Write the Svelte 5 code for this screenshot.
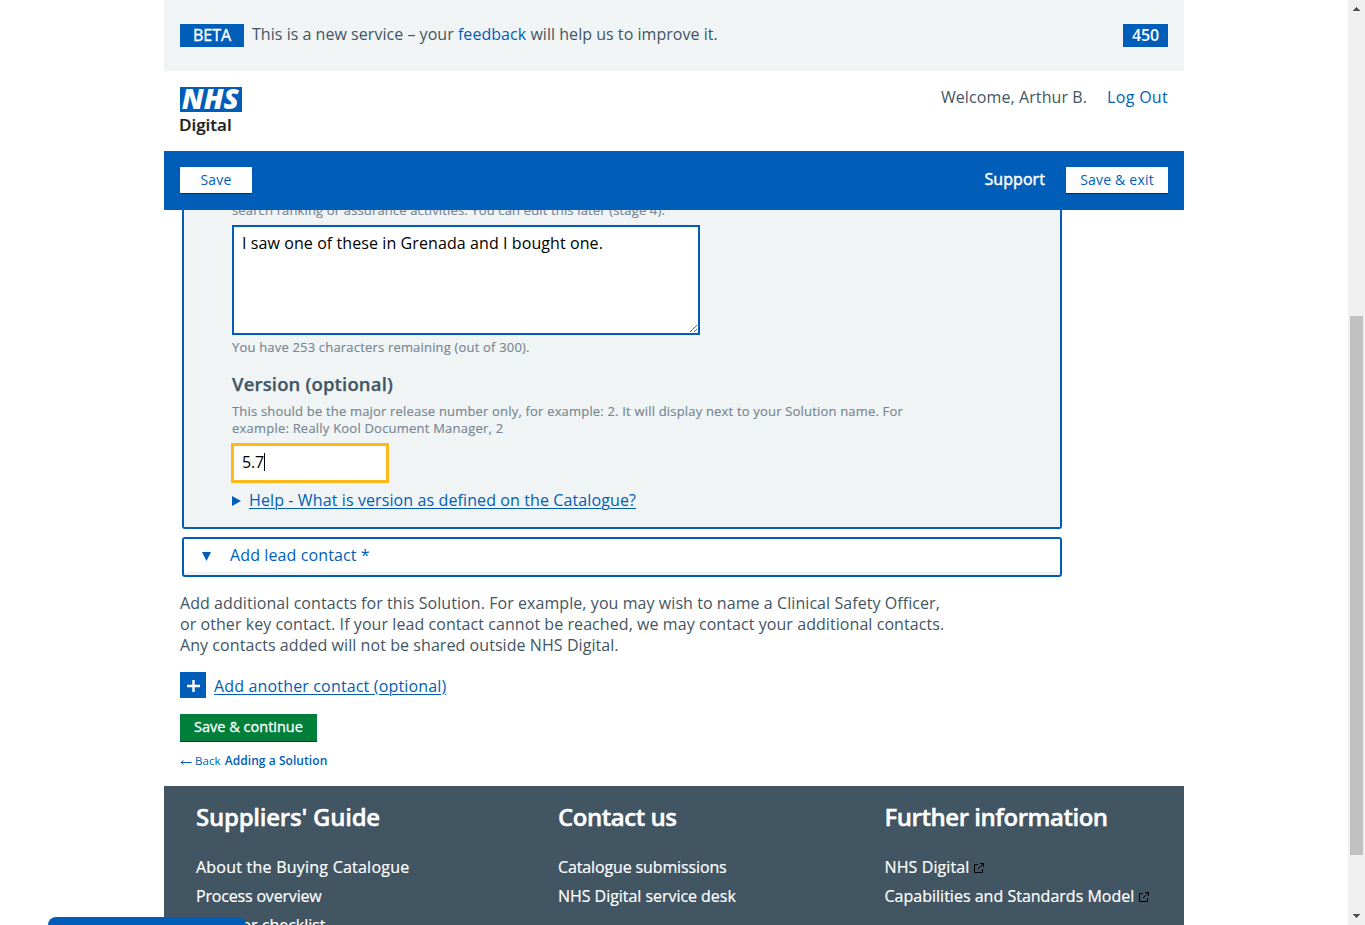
<script>
  const columns = [
    {
      title: "Suppliers' Guide",
      titleSpacing: -0.24,
      links: [
        { label: 'About the Buying Catalogue', spacing: 0.23 },
        { label: 'Process overview', spacing: -0.18 },
        { label: 'Supplier checklist', spacing: -0.02 }
      ]
    },
    {
      title: 'Contact us',
      titleSpacing: -0.46,
      links: [
        { label: 'Catalogue submissions', spacing: -0.13 },
        { label: 'NHS Digital service desk', spacing: -0.04 }
      ]
    },
    {
      title: 'Further information',
      titleSpacing: -0.47,
      links: [
        { label: 'NHS Digital', spacing: 0.1, external: true },
        { label: 'Capabilities and Standards Model', spacing: 0.01, external: true }
      ]
    }
  ];
  let description = $state('I saw one of these in Grenada and I bought one.');
</script>

<div class="window">
  <div class="page">
    <div class="beta-bar">
      <span class="tag beta">BETA</span>
      <span class="beta-text">This is a new service – your <a href="#feedback">feedback</a> will help us to improve it.</span>
      <span class="tag score">450</span>
    </div>

    <header>
      <div class="brand">
        <svg class="nhs" width="62" height="25" viewBox="0 0 62 25" role="img" aria-label="NHS">
          <rect width="62" height="25" fill="#005eb8" />
          <text x="1.8" y="22.3" textLength="57" lengthAdjust="spacingAndGlyphs">NHS</text>
        </svg>
        <span class="org">Digital</span>
      </div>
      <div class="account">
        <span>Welcome, Arthur B.</span>
        <a href="#logout">Log Out</a>
      </div>
    </header>

    <nav>
      <button class="nav-btn save">Save</button>
      <div class="nav-right">
        <a class="support" href="#support">Support</a>
        <button class="nav-btn exit">Save &amp; exit</button>
      </div>
    </nav>

    <main>
      <section class="panel">
        <p class="hint first">search ranking or assurance activities. You can edit this later (stage 4).</p>
        <textarea bind:value={description} spellcheck="false"></textarea>
        <p class="hint remaining">You have 253 characters remaining (out of 300).</p>
        <h3>Version (optional)</h3>
        <p class="hint version">This should be the major release number only, for example: 2. It will display next to your Solution name. For<br /><span class="second">example: Really Kool Document Manager, 2</span></p>
        <div class="input"><span>5.7</span><i class="caret"></i></div>
        <div class="help">
          <svg width="9" height="10" viewBox="0 0 9 10"><path d="M0 0L9 5L0 10Z" fill="#005eb8" /></svg>
          <a href="#help">Help - What is version as defined on the Catalogue?</a>
        </div>
      </section>

      <section class="lead">
        <div class="lead-row">
          <svg width="9" height="9" viewBox="0 0 9 9"><path d="M0 0H9L4.5 9Z" fill="#005eb8" /></svg>
          <span>Add lead contact *</span>
        </div>
      </section>

      <p class="copy">Add additional contacts for this Solution. For example, you may wish to name a Clinical Safety Officer,<br />or other key contact. If your lead contact cannot be reached, we may contact your additional contacts.<br />Any contacts added will not be shared outside NHS Digital.</p>

      <div class="add">
        <span class="plus"><svg width="26" height="26" viewBox="0 0 26 26"><path d="M7 14H20M13.5 8V20" stroke="#fff" stroke-width="2.4" fill="none" /></svg></span>
        <a href="#add">Add another contact (optional)</a>
      </div>
      <button class="continue">Save &amp; continue</button>
      <a class="back" href="#back"><svg width="12" height="8" viewBox="0 0 12 8"><path d="M1 4.5H11.5M3.5 2.5L1 4.5L3.5 6.5" stroke="#005eb8" fill="none" /></svg>Back <b>Adding a Solution</b></a>
    </main>

    <footer>
      {#each columns as col}
        <div>
          <h2 style="letter-spacing:{col.titleSpacing}px">{col.title}</h2>
          <ul>
            {#each col.links as link}
              <li>
                <a href="#link" style="letter-spacing:{link.spacing}px">{link.label}</a>
                {#if link.external}
                  <svg width="10" height="10" viewBox="0 0 10 10"><path d="M4 1.5H.5V9.5H8.5V6M6 .5H9.5V4M9.5 .5L4 6" stroke="#000" fill="none" /></svg>
                {/if}
              </li>
            {/each}
          </ul>
        </div>
      {/each}
    </footer>
    <div class="drawer"></div>
  </div>

  <div class="scrollbar">
    <svg width="7" height="4" viewBox="0 0 7 4" shape-rendering="crispEdges"><path d="M3 0h1v1h1v1h1v1h1v1H0V3h1V2h1V1h1z" fill="#505050" /></svg>
    <div class="thumb"></div>
    <svg width="7" height="4" viewBox="0 0 7 4" shape-rendering="crispEdges"><path d="M0 0h7v1H6v1H5v1H4v1H3V3H2V2H1V1H0z" fill="#505050" /></svg>
  </div>
</div>

<style>
  :global(body) { margin: 0; overflow: hidden; }
  * { box-sizing: border-box; }
  p, h2, h3, ul { margin: 0; padding: 0; }
  a { color: #005eb8; text-decoration: none; }
  svg { display: block; flex: none; }
  button { font: inherit; border: 0; padding: 0; border-radius: 0; }
  .window {
    display: flex; width: 1365px; height: 925px; overflow: hidden; background: #fff;
    font: 16px/21px "Open Sans", "Noto Sans", sans-serif; color: #425563;
  }
  .page { position: relative; width: 1348px; height: 925px; padding: 0 164px; overflow: hidden; }
  .beta-bar { display: flex; align-items: flex-start; height: 71px; padding: 24px 16px 0; background: #f0f4f5; }
  .tag { height: 23px; background: #005eb8; color: #fff; text-align: center; line-height: 22px; }
  .beta { width: 64px; -webkit-text-stroke: 0.35px #fff; }
  .score { width: 45px; margin-left: auto; font-weight: 600; letter-spacing: -0.2px; }
  .beta-text { margin-left: 8px; letter-spacing: 0.057px; word-spacing: -0.1px; }
  header { display: flex; justify-content: space-between; height: 80px; padding: 16px 16px 0; }
  .nhs text { font: italic 800 28px "Open Sans", sans-serif; fill: #fff; }
  .org { display: block; margin: 2px 0 0 -1px; color: #231f20; font-weight: 600; font-size: 17px; line-height: 21px; letter-spacing: 0; -webkit-text-stroke: 0.2px #231f20; }
  .account { display: flex; gap: 20px; letter-spacing: 0.1px; }
  .account a { letter-spacing: 0.3px; }
  nav { display: flex; justify-content: space-between; height: 59px; padding: 16px 16px 0; background: #005eb8; }
  .nav-btn { height: 27px; background: #fff; color: #005eb8; border-bottom: 1px solid #212b32; font-size: 14px; line-height: 26px; letter-spacing: 0.2px; }
  .save { width: 72px; }
  .exit { width: 102px; }
  .nav-right { display: flex; gap: 21px; }
  .support { color: #fff; -webkit-text-stroke: 0.45px #fff; line-height: 24px; letter-spacing: 0.07px; }
  main { height: 576px; overflow: hidden; padding: 0 16px; }
  .panel { width: 880px; height: 319px; margin-left: 2px; padding-left: 48px; border: 2px solid #005eb8; border-top: 0; border-radius: 0 0 3px 3px; background: #f0f4f5; display: flow-root; }
  .hint { font-size: 13px; line-height: 17px; color: #768692; letter-spacing: 0.184px; white-space: nowrap; -webkit-text-stroke: 0.15px #768692; }
  .second { letter-spacing: 0.215px; }
  .first { margin-top: -8px; letter-spacing: 0.146px; }
  textarea { display: block; width: 468px; height: 110px; margin-top: 6px; padding: 6px 8px; border: 2px solid #005eb8; background: #fff; color: #000; font: inherit; letter-spacing: 0.087px; outline: 0; border-radius: 0; overflow: hidden; resize: both; }
  .remaining { margin-top: 4px; }
  h3 { margin-top: 16px; font-size: 18.5px; line-height: 24px; font-weight: 600; letter-spacing: 0.16px; -webkit-text-stroke: 0.25px #425563; }
  .version { margin-top: 7px; }
  .input { display: flex; align-items: center; width: 158px; height: 40px; margin: 6px 0 0 -1px; padding: 0 8px 2px; border: 3px solid #ffb81c; background: #fff; color: #000; }
  .input span { letter-spacing: -0.2px; }
  .caret { width: 1px; height: 18px; background: #000; }
  .help { display: flex; align-items: center; gap: 8px; margin-top: 6px; line-height: 22px; }
  .help svg { margin-top: 1px; }
  .help a, .add a { text-decoration: underline; text-underline-offset: 2px; text-decoration-thickness: 1px; }
  .help a { letter-spacing: 0.11px; }
  .lead { width: 880px; height: 40px; margin: 8px 0 0 2px; border: 2px solid #005eb8; border-radius: 3px; background: #f0f4f5; }
  .lead-row { display: flex; align-items: center; height: 33px; padding: 0 0 0 18px; gap: 19px; background: #fff; color: #005eb8; letter-spacing: 0.11px; }
  .lead-row svg { margin-top: 2px; }
  .copy { margin-top: 16px; letter-spacing: 0.067px; white-space: nowrap; }
  .add { display: flex; align-items: center; gap: 8px; margin-top: 16px; height: 26px; letter-spacing: 0.16px; }
  .add a { margin-top: 2px; }
  .plus { background: #005eb8; }
  .continue { display: block; width: 137px; height: 28px; margin-top: 16px; padding-bottom: 2px; background: #007f3b; border-bottom: 1px solid #212b32; color: #fff; font-size: 14.5px; -webkit-text-stroke: 0.3px #fff; line-height: 25px; }
  .back { display: flex; align-items: center; margin-top: 11px; font-size: 11.5px; line-height: 16px; letter-spacing: 0.06px; white-space: pre; }
  .back svg { margin: 2px 3px 0 0; }
  .back b { font-size: 12px; font-weight: 600; letter-spacing: 0.06px; margin-left: 1px; }
  footer { display: grid; grid-template-columns: 362px 326.5px 1fr; height: 139px; padding: 16px 0 0 32px; background: #425563; color: #fff; overflow: hidden; }
  h2 { margin-bottom: 21px; font-size: 24px; line-height: 30px; font-weight: 600; -webkit-text-stroke: 0.45px #fff; }
  ul { list-style: none; }
  li { display: flex; align-items: center; gap: 5px; height: 29px; line-height: 29px; white-space: nowrap; }
  li a { color: #fff; -webkit-text-stroke: 0.2px #fff; }
  .drawer { position: absolute; left: 48px; top: 917px; width: 198px; height: 20px; border-radius: 8px; background: #005eb8; }
  .scrollbar { display: flex; flex-direction: column; align-items: center; width: 17px; height: 925px; padding: 7px 0; background: #f0f0f0; }
  .thumb { width: 13px; height: 539px; margin: 305px 0 59px; background: #c1c1c1; }
</style>
